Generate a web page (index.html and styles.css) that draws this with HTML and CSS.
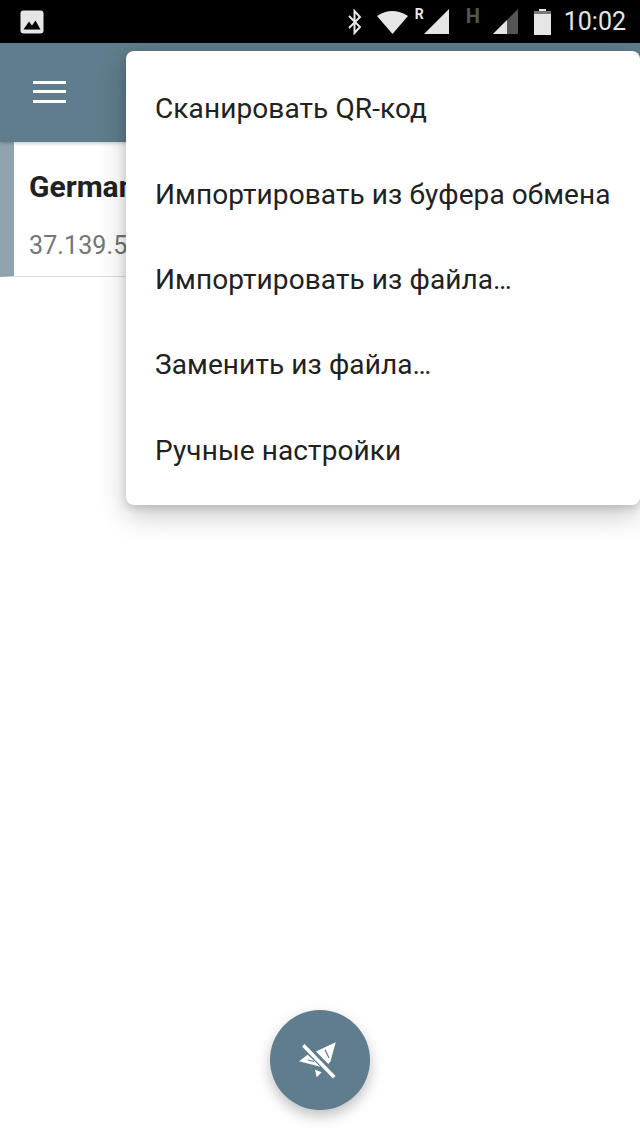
FILE: index.html
```html
<!DOCTYPE html>
<html lang="ru">
<head>
    <meta charset="UTF-8">
    <meta name="viewport" content="width=device-width, initial-scale=1.0">
    <title>Профили</title>
    <link rel="stylesheet" href="styles.css">
</head>
<body>
    <div class="screen">
        <div class="status-bar">
            <svg class="status-pic" width="24" height="24" viewBox="0 0 24 24">
                <rect x="0.5" y="0.5" width="23" height="23" rx="3" fill="#e6e6e6"/>
                <path d="M3.5 19.5 L9 11.5 L12 15.5 L15.5 10.5 L20.5 19.5 Z" fill="#000"/>
            </svg>
            <div class="status-icons">
                <svg class="bluetooth" width="16" height="26" viewBox="0 0 16 26">
                    <path d="M2 7 L13 18 L7.5 24 V2 L13 8 L2 19" fill="none" stroke="#e6e6e6" stroke-width="2"/>
                </svg>
                <svg class="wifi" width="32" height="24" viewBox="0 0 32 24">
                    <path d="M0 6 Q15 -4 31 6 L15.5 24 Z" fill="#e6e6e6"/>
                </svg>
                <span class="roaming">R</span>
                <svg class="signal" width="26" height="26" viewBox="0 0 26 26">
                    <path d="M0 25 L25 0 V25 Z" fill="#e6e6e6"/>
                </svg>
                <span class="net-type">H</span>
                <svg class="signal-two" width="26" height="26" viewBox="0 0 26 26">
                    <path d="M0 25 L25 0 V25 Z" fill="#555"/>
                    <path d="M0 25 L14 11 V25 Z" fill="#e6e6e6"/>
                </svg>
                <svg class="battery" width="17" height="26" viewBox="0 0 17 26">
                    <path d="M5 0 H12 V2 H17 V26 H0 V2 H5 Z" fill="#e6e6e6"/>
                    <rect x="0" y="2" width="17" height="3" fill="#777"/>
                </svg>
                <span class="clock">10:02</span>
            </div>
        </div>

        <header class="toolbar">
            <svg class="menu-icon" width="33" height="22" viewBox="0 0 33 22">
                <rect y="0" width="33" height="3" fill="#fff"/>
                <rect y="9" width="33" height="3" fill="#fff"/>
                <rect y="19" width="33" height="3" fill="#fff"/>
            </svg>
        </header>

        <div class="profile-card">
            <div class="profile-text">
                <div class="profile-name">Germany</div>
                <div class="profile-host">37.139.52.10</div>
            </div>
        </div>

        <div class="popup-menu">
            <div class="menu-item">Сканировать QR-код</div>
            <div class="menu-item">Импортировать из буфера обмена</div>
            <div class="menu-item">Импортировать из файла…</div>
            <div class="menu-item">Заменить из файла…</div>
            <div class="menu-item">Ручные настройки</div>
        </div>

        <div class="fab">
            <svg width="44" height="44" viewBox="0 0 44 44">
                <!-- paper plane, crossed out -->
                <path d="M37.7 4.3 L18 13.5 L30.3 26 L32.5 23.3 Z" fill="#fff"/>
                <path d="M1 23.3 L9.7 16.7 L23 29 Z" fill="#fff"/>
                <path d="M17 31.7 L18.7 39.3 L23.7 34.3 Z" fill="#fff"/>
                <path d="M27 11.7 L31 20 M10 22 L16 23.5" fill="none" stroke="#5f7d8c" stroke-width="1.2"/>
                <path d="M5.3 7.3 L36.3 39.3" stroke="#5f7d8c" stroke-width="5.4"/>
                <path d="M5.3 7.3 L36.3 39.3" stroke="#fff" stroke-width="3.6"/>
            </svg>
        </div>
    </div>
</body>
</html>
```

FILE: styles.css
```css
* {
    margin: 0;
    padding: 0;
    box-sizing: border-box;
    font-family: Roboto, "Noto Sans", sans-serif;
}
body {
    background: #fff;
    width: 640px;
    height: 1138px;
    overflow: hidden;
}
.screen {
    position: relative;
    width: 640px;
    height: 1138px;
    overflow: hidden;
    display: flex;
    flex-direction: column;
}
.status-bar {
    height: 43px;
    background: #000;
    display: flex;
    align-items: center;
    justify-content: space-between;
    padding: 0 14px 0 20px;
    flex-shrink: 0;
}
.status-icons {
    display: flex;
    align-items: center;
    height: 43px;
}
.bluetooth {
    margin-right: 14px;
}
.roaming {
    color: #e6e6e6;
    font-size: 14px;
    font-weight: 700;
    width: 10px;
    margin: -15px 0 0 6px;
}
.signal {
    margin: 0 0 0 -1px;
}
.net-type {
    color: #555;
    font-size: 20px;
    font-weight: 700;
    width: 16px;
    margin: -11px 0 0 16px;
}
.signal-two {
    margin-left: 11px;
}
.battery {
    margin-left: 15px;
}
.clock {
    color: #e6e6e6;
    font-size: 25px;
    margin-left: 13px;
}
.toolbar {
    height: 99px;
    background: #5f7d8c;
    display: flex;
    align-items: center;
    padding-left: 33px;
    flex-shrink: 0;
    position: relative;
    z-index: 1;
    box-shadow: 0 1px 4px rgba(0, 0, 0, 0.25);
}
.menu-icon {
    margin-top: -1px;
}
.profile-card {
    height: 135px;
    background: #fff;
    border-left: 14px solid #8fa4ae;
    border-bottom: 1px solid #ddd;
    padding: 26px 0 0 15px;
    flex-shrink: 0;
}
.profile-name {
    font-size: 30px;
    font-weight: 700;
    color: #212121;
    line-height: 38px;
}
.profile-host {
    font-size: 25px;
    color: #757575;
    margin-top: 25px;
    line-height: 30px;
    letter-spacing: 0.1px;
}
.popup-menu {
    position: absolute;
    top: 51px;
    left: 126px;
    width: 514px;
    height: 454px;
    background: #fff;
    border-radius: 8px;
    padding: 15px 0;
    z-index: 2;
    box-shadow: 0 10px 28px rgba(0, 0, 0, 0.22), 0 3px 8px rgba(0, 0, 0, 0.14);
}
.menu-item {
    height: 85.4px;
    display: flex;
    align-items: center;
    padding-left: 29px;
    font-size: 28px;
    letter-spacing: 0.1px;
    color: #212121;
    white-space: nowrap;
}
.fab {
    position: absolute;
    left: 270px;
    top: 1010px;
    width: 100px;
    height: 100px;
    border-radius: 50%;
    background: #5f7d8c;
    display: flex;
    align-items: center;
    justify-content: center;
    box-shadow: 0 6px 14px rgba(0, 0, 0, 0.25);
}
```
